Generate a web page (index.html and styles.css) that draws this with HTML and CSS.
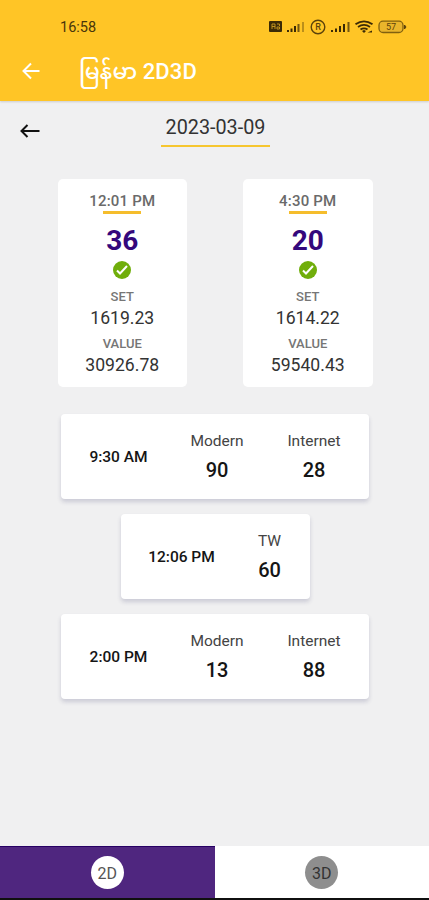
FILE: index.html
```
<!DOCTYPE html>
<html lang="my">
<head>
    <meta charset="UTF-8">
    <meta name="viewport" content="width=device-width, initial-scale=1.0">
    <title>မြန်မာ 2D3D</title>
    <link rel="stylesheet" href="styles.css">
</head>
<body>

<header class="header">
    <div class="status">
        <span class="clock">16:58</span>
        <svg class="status-icons" width="140" height="16" viewBox="0 0 140 16">
            <rect x="0" y="2" width="13" height="11" rx="1" fill="#3b2a06"/>
            <path d="M3 10V5h3v5M3 7.500h3M8 5h2.500v2M8 10V8h2.500v2z" fill="none" stroke="#c99a20" stroke-width="0.900"/>
            <g fill="#3b2a06">
                <rect x="18" y="11" width="2" height="2"/>
                <rect x="21.500" y="9.500" width="2" height="3.500"/>
                <rect x="25" y="7" width="2" height="6"/>
                <rect x="28.500" y="5" width="2" height="8" opacity="0.700"/>
                <rect x="33" y="3" width="2" height="10" opacity="0.350"/>
                <rect x="62" y="11" width="2" height="2"/>
                <rect x="66" y="9.500" width="2" height="3.500"/>
                <rect x="70" y="7" width="2" height="6"/>
                <rect x="74" y="5" width="2" height="8"/>
                <rect x="78.500" y="3" width="2" height="10" opacity="0.700"/>
            </g>
            <circle cx="49" cy="8" r="6.800" fill="none" stroke="#5c430b" stroke-width="1.400"/>
            <text class="badge" x="49" y="11.300" text-anchor="middle">R</text>
            <g fill="none" stroke="#3b2a06" stroke-width="1.800">
                <path d="M86.500 5.300q8.500-6 17 0"/>
                <path d="M89 8q6-4.300 12 0"/>
                <path d="M91.500 10.600q3.500-2.500 7 0"/>
            </g>
            <path d="M93 12l2-1 2 1-2 2zM98.500 13.500l4.500-2v2z" fill="#3b2a06"/>
            <rect x="110" y="2.200" width="24" height="11.300" rx="4" fill="#e9b52c" stroke="#80600f" stroke-width="1.300"/>
            <path d="M135.500 6l1.500 2-1.500 2z" fill="#5c430b" stroke="#5c430b"/>
            <text class="battery" x="122" y="11.200" text-anchor="middle">57</text>
        </svg>
    </div>
    <div class="toolbar">
        <svg width="18" height="18" viewBox="0 0 18 18" fill="none" stroke="#fff" stroke-width="2">
            <path d="M17.500 9H2M9 1.500L1.500 9L9 16.500"/>
        </svg>
        <h1 class="title">မြန်မာ 2D3D</h1>
    </div>
</header>

<main class="content">
    <div class="date-row">
        <svg class="back" width="20" height="14" viewBox="0 0 20 14" fill="none" stroke="#111" stroke-width="2">
            <path d="M19.500 7H2M7.500 1L1.500 7L7.500 13"/>
        </svg>
        <span class="date">2023-03-09</span>
    </div>

    <div class="results">
        <div class="result">
            <span class="time">12:01 PM</span>
            <strong class="number">36</strong>
            <svg class="check" viewBox="0 0 18 18">
                <circle cx="9" cy="9" r="9" fill="#70ae0b"/>
                <path d="M4 9.500l3 3 7-7.500" fill="none" stroke="#fff" stroke-width="2"/>
            </svg>
            <span class="label">SET</span>
            <span class="amount">1619.23</span>
            <span class="label">VALUE</span>
            <span class="amount">30926.78</span>
        </div>
        <div class="result">
            <span class="time">4:30 PM</span>
            <strong class="number">20</strong>
            <svg class="check" viewBox="0 0 18 18">
                <circle cx="9" cy="9" r="9" fill="#70ae0b"/>
                <path d="M4 9.500l3 3 7-7.500" fill="none" stroke="#fff" stroke-width="2"/>
            </svg>
            <span class="label">SET</span>
            <span class="amount">1614.22</span>
            <span class="label">VALUE</span>
            <span class="amount">59540.43</span>
        </div>
    </div>

    <div class="rounds">
        <div class="round">
            <span class="round-time">9:30 AM</span>
            <div class="source"><span>Modern</span><b>90</b></div>
            <div class="source"><span>Internet</span><b>28</b></div>
        </div>
        <div class="round round-small">
            <span class="round-time">12:06 PM</span>
            <div class="source"><span>TW</span><b>60</b></div>
        </div>
        <div class="round">
            <span class="round-time">2:00 PM</span>
            <div class="source"><span>Modern</span><b>13</b></div>
            <div class="source"><span>Internet</span><b>88</b></div>
        </div>
    </div>
</main>

<nav class="tabs">
    <div class="tab active"><span class="dot">2D</span></div>
    <div class="tab"><span class="dot">3D</span></div>
</nav>

</body>
</html>
```
FILE: styles.css
```
* {
    box-sizing: border-box;
}
body {
    margin: 0;
    height: 900px;
    display: flex;
    flex-direction: column;
    overflow: hidden;
    font-family: Roboto, "Noto Sans Myanmar", "Noto Sans", sans-serif;
    background-color: #f0f0f1;
    color: #151515;
}
.header {
    height: 101px;
    background-color: #ffc526;
    box-shadow: 0 1px 2px rgba(0, 0, 0, 0.15);
}
.status {
    display: flex;
    justify-content: space-between;
    align-items: center;
    height: 42px;
    padding: 12px 20px 0 60px;
}
.clock {
    font-size: 14.5px;
    color: #49350a;
}
.badge {
    font-size: 9px;
    font-weight: 500;
    fill: #5c430b;
}
.battery {
    font-size: 9px;
    fill: #5c430b;
}
.toolbar {
    display: flex;
    align-items: center;
    height: 58px;
    padding-left: 22px;
}
.title {
    margin: 1px 0 0 39px;
    font-size: 22px;
    font-weight: 500;
    line-height: 30px;
    letter-spacing: 0.1px;
    color: #fff;
}
.content {
    flex: 1;
}
.date-row {
    display: grid;
    grid-template-columns: 161px 109px 1fr;
    height: 46px;
}
.back {
    margin: 23px 0 0 20px;
}
.date {
    padding-top: 14px;
    border-bottom: 2px solid #f6c62f;
    font-size: 19.8px;
    line-height: 25px;
    text-align: center;
    color: #333;
}
.results {
    display: flex;
    justify-content: center;
    gap: 56px;
    margin-top: 32px;
    padding-left: 1px;
}
.result {
    display: flex;
    flex-direction: column;
    align-items: center;
    width: 129.5px;
    height: 208px;
    padding-top: 13px;
    border-radius: 5px;
    background-color: #fff;
}
.time {
    font-size: 15px;
    font-weight: 500;
    line-height: 19px;
    letter-spacing: 0.2px;
    color: #6a6a6a;
}
.time::after {
    content: "";
    display: block;
    width: 38px;
    height: 3px;
    margin: 0 auto;
    background-color: #f5bd2c;
}
.number {
    margin-top: 10px;
    font-size: 28px;
    font-weight: 700;
    line-height: 34px;
    color: #34087c;
}
.check {
    width: 18px;
    height: 18px;
    margin: 3px 0 9px;
}
.label {
    font-size: 13px;
    font-weight: 500;
    line-height: 18px;
    color: #767676;
}
.amount {
    margin-bottom: 5px;
    font-size: 17.6px;
    line-height: 24px;
    color: #333;
}
.rounds {
    display: flex;
    flex-direction: column;
    align-items: center;
    gap: 15px;
    margin-top: 27px;
    padding-left: 1px;
}
.round {
    display: grid;
    grid-template-columns: 115px 82px 112px;
    align-items: center;
    width: 308px;
    height: 85px;
    padding-top: 1px;
    border-radius: 4px;
    background-color: #fff;
    box-shadow: 0 3px 4px rgba(60, 60, 110, 0.2);
    text-align: center;
}
.round-small {
    grid-template-columns: 122px 54px;
    width: 189px;
}
.round-time {
    font-size: 15.5px;
    font-weight: 500;
}
.source {
    display: flex;
    flex-direction: column;
}
.source span {
    font-size: 15.5px;
    line-height: 26px;
    color: #444;
}
.source b {
    font-size: 20px;
    font-weight: 500;
    line-height: 32px;
}
.tabs {
    display: flex;
    height: 54px;
    border-bottom: 2px solid #101010;
}
.tab {
    display: flex;
    flex: 1;
    align-items: center;
    justify-content: center;
    background-color: #fff;
}
.tab.active {
    background-color: #4f267f;
    border-top: 1px solid #260064;
}
.dot {
    width: 33px;
    height: 33px;
    border-radius: 50%;
    background-color: #8e8e8e;
    font-size: 16px;
    line-height: 35px;
    text-align: center;
    color: #333;
}
.active .dot {
    background-color: #fff;
    color: #555;
}
```
